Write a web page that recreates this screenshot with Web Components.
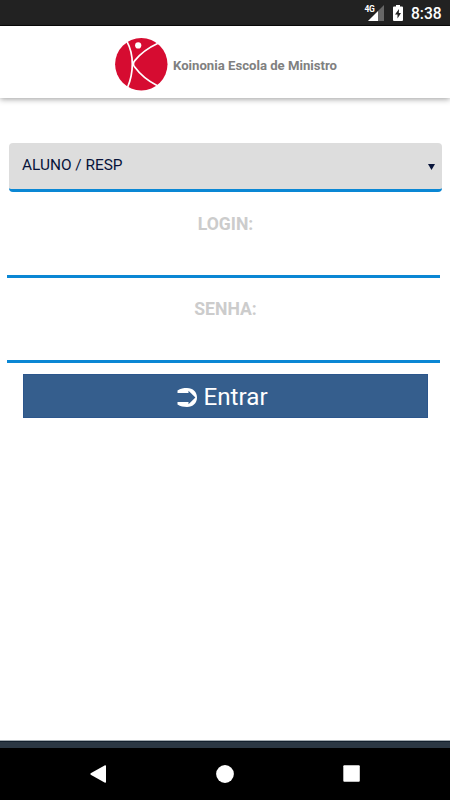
<!DOCTYPE html>
<html lang="pt-BR">
<head>
<meta charset="utf-8">
<title>Koinonia Escola de Ministro</title>
<style>
  html, body {
    margin: 0;
    height: 100%;
    overflow: hidden;
    background: #fff;
    font-family: Roboto, "Liberation Sans", sans-serif;
  }
</style>
</head>
<body>
<login-screen></login-screen>

<script>
class StatusBar extends HTMLElement {
  constructor() {
    super();
    this.attachShadow({ mode: 'open' });
    this.shadowRoot.innerHTML = `
      <style>
        :host {
          display: flex;
          justify-content: flex-end;
          height: 25px;
          background: #222;
          border-bottom: 1px solid #0a0a0a;
          color: #fff;
          box-sizing: content-box;
        }
        .network {
          font-size: 8.5px;
          font-weight: 700;
          line-height: 10px;
          padding-top: 4px;
          width: 9.5px;
          letter-spacing: -0.4px;
          position: relative;
          z-index: 1;
        }
        svg {
          display: block;
        }
        .signal {
          margin: 5px 9px 0 -6px;
        }
        .battery {
          margin: 5px 8px 0 0;
        }
        .clock {
          width: 39px;
          font-size: 15.6px;
          font-weight: 500;
          line-height: 28px;
        }
      </style>
      <span class="network">4G</span>
      <svg class="signal" width="16" height="16" viewBox="0 0 16 16">
        <path d="M16 0V16H0Z" fill="#666"/>
        <path d="M10 5V16H0L3.5 12.5V7H8V5Z" fill="#222"/>
        <path d="M10 6V16H0Z" fill="#fff"/>
      </svg>
      <svg class="battery" width="10" height="16" viewBox="0 0 10 16">
        <path d="M3 0H7V1.5H9Q10 1.5 10 2.5V15Q10 16 9 16H1Q0 16 0 15V2.5Q0 1.5 1 1.5H3Z" fill="#fff"/>
        <path d="M6 4L2 9.5H4.5V13.5L8 8H5.8Z" fill="#222"/>
      </svg>
      <span class="clock"><slot></slot></span>
    `;
  }
}

class AppHeader extends HTMLElement {
  constructor() {
    super();
    this.attachShadow({ mode: 'open' });
    this.shadowRoot.innerHTML = `
      <style>
        :host {
          display: flex;
          align-items: flex-start;
          height: 72px;
          padding-left: 115px;
          box-sizing: border-box;
          background: #fff;
          box-shadow: 0 1px 6px rgba(0, 0, 0, 0.4);
        }
        svg {
          display: block;
          margin-top: 12px;
        }
        .title {
          margin: 31px 0 0 5px;
          color: #808080;
          font-size: 13.15px;
          font-weight: 700;
          line-height: 17px;
          white-space: nowrap;
        }
      </style>
      <svg width="53" height="53" viewBox="0 0 53 53">
        <circle cx="26.3" cy="26.3" r="26.2" fill="#d60c31"/>
        <circle cx="23.2" cy="7.4" r="3.1" fill="#fff"/>
        <g fill="none" stroke="#fff" stroke-width="1.7">
          <path d="M12 3.7C16 11 17.3 19 17.3 26C17.3 34 16.5 40 12.7 49"/>
          <path d="M43 5.3C34 9.5 25.5 15.5 19.8 22.6Q17.2 25.8 19.5 28.8C25.5 37 32 42.5 42 47.5"/>
        </g>
      </svg>
      <span class="title"><slot></slot></span>
    `;
  }
}

class ProfileSelect extends HTMLElement {
  constructor() {
    super();
    this.attachShadow({ mode: 'open' });
    this.shadowRoot.innerHTML = `
      <style>
        :host {
          display: flex;
          justify-content: space-between;
          height: 49px;
          padding: 0 6.5px 0 13px;
          box-sizing: border-box;
          border-bottom: 3px solid #0a87d4;
          border-radius: 4px;
          background: #ddd;
          color: #08143a;
          font-size: 15.4px;
          line-height: 45px;
        }
        svg {
          margin-top: 21px;
        }
      </style>
      <span><slot></slot></span>
      <svg width="7" height="6" viewBox="0 0 7 6">
        <path d="M0 0H7L3.5 6Z" fill="#08143a"/>
      </svg>
    `;
  }
}

class LoginField extends HTMLElement {
  constructor() {
    super();
    this.attachShadow({ mode: 'open' });
    this.shadowRoot.innerHTML = `
      <style>
        :host {
          display: block;
          height: 85.5px;
          box-sizing: border-box;
          border-bottom: 3px solid #0a87d4;
        }
        label {
          display: block;
          padding: 20.5px 0 0 4px;
          color: #ccc;
          font-size: 17.6px;
          font-weight: 700;
          line-height: 22px;
          text-align: center;
        }
        input {
          display: block;
          width: 100%;
          height: 36px;
          padding: 0;
          border: none;
          outline: none;
          background: transparent;
        }
      </style>
      <label for="field"><slot></slot></label>
      <input id="field">
    `;
  }

  connectedCallback() {
    this.shadowRoot.getElementById('field').type = this.getAttribute('type') || 'text';
  }
}

class EnterButton extends HTMLElement {
  constructor() {
    super();
    this.attachShadow({ mode: 'open' });
    this.shadowRoot.innerHTML = `
      <style>
        :host {
          display: block;
        }
        button {
          display: flex;
          width: 100%;
          height: 44px;
          padding: 0 0 0 153px;
          border: 1px solid #2c568c;
          background: #355e8d;
          color: #fff;
          font-family: inherit;
          font-size: 24.2px;
          line-height: 44px;
          cursor: pointer;
        }
        svg {
          display: block;
          margin: 13px 6.5px 0 0;
        }
      </style>
      <button type="button">
        <svg width="20" height="19" viewBox="0 0 20 19">
          <path d="M.5 2.4C3.5 .6 6.5 0 10 0C16 0 20 4 20 9.5C20 15 16 19 10 19C6.5 19 3.5 18.4 .5 16.6V14H11.5V16.2L18.4 9.5L11.5 2.8V5H.5Z" fill="#fff"/>
        </svg>
        <slot></slot>
      </button>
    `;
  }
}

class NavigationBar extends HTMLElement {
  constructor() {
    super();
    this.attachShadow({ mode: 'open' });
    this.shadowRoot.innerHTML = `
      <style>
        :host {
          display: flex;
          justify-content: space-between;
          height: 60px;
          padding: 17px 90px 0;
          box-sizing: border-box;
          border-top: 8px solid #2b3743;
          background: #000;
          border-image: linear-gradient(#a5adb2 0 1px, #13202d 1px 2px, #2b3743 2px) 8 0 0 0;
        }
        svg {
          display: block;
        }
      </style>
      <svg width="17" height="18" viewBox="0 0 17 18">
        <path d="M15 .2Q16 0 16 1V17Q16 18 15 17.8L.7 9.7Q0 9 .7 8.3Z" fill="#fff"/>
      </svg>
      <svg width="18" height="18" viewBox="0 0 18 18">
        <circle cx="9" cy="9" r="8.9" fill="#fff"/>
      </svg>
      <svg width="17" height="18" viewBox="0 0 17 18">
        <rect x=".3" y=".3" width="16.5" height="16.5" rx="1" fill="#fff"/>
      </svg>
    `;
  }
}

class LoginScreen extends HTMLElement {
  constructor() {
    super();
    this.attachShadow({ mode: 'open' });
    this.shadowRoot.innerHTML = `
      <style>
        :host {
          display: flex;
          flex-direction: column;
          width: 450px;
          height: 800px;
          background: #fff;
        }
        main {
          flex: 1;
          padding: 45px 10px 0 7px;
        }
        profile-select {
          margin: 0 -1.5px 0 2px;
        }
        enter-button {
          margin: 11px 12px 0 16px;
        }
      </style>
      <status-bar>8:38</status-bar>
      <app-header>Koinonia Escola de Ministro</app-header>
      <main>
        <profile-select>ALUNO / RESP</profile-select>
        <login-field>LOGIN:</login-field>
        <login-field type="password">SENHA:</login-field>
        <enter-button>Entrar</enter-button>
      </main>
      <navigation-bar></navigation-bar>
    `;
  }
}

customElements.define('status-bar', StatusBar);
customElements.define('app-header', AppHeader);
customElements.define('profile-select', ProfileSelect);
customElements.define('login-field', LoginField);
customElements.define('enter-button', EnterButton);
customElements.define('navigation-bar', NavigationBar);
customElements.define('login-screen', LoginScreen);
</script>
</body>
</html>
